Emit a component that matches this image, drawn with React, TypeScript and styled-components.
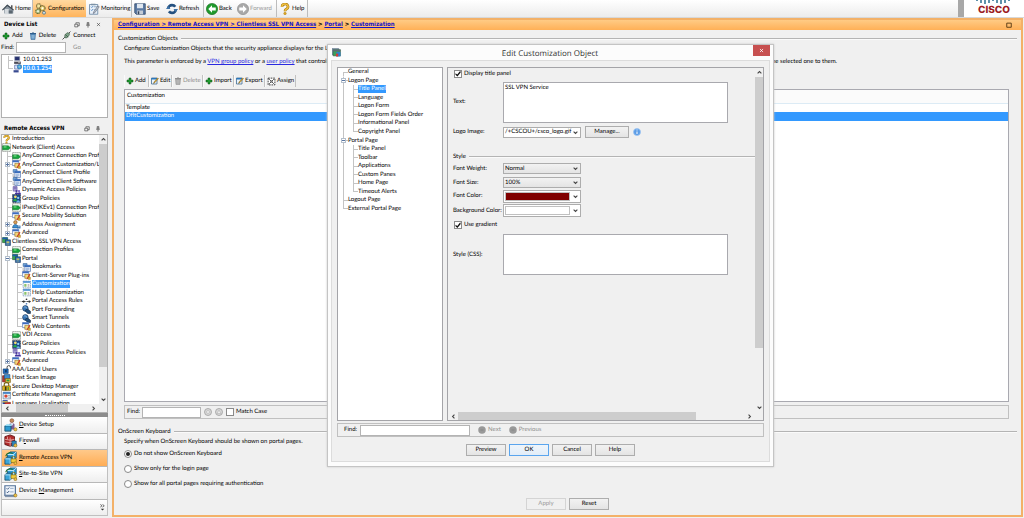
import React from "react";
import styled, { createGlobalStyle, css } from "styled-components";

const Global = createGlobalStyle`
  * { box-sizing: border-box; }
  body { margin: 0; background: #f0f0f0; }
  body, button, input, select, textarea, table {
    font-family: Lato, "Liberation Sans", sans-serif;
    font-size: 6px;
    line-height: 8px;
    color: #000;
    text-rendering: geometricPrecision;
  }
  button, input, select, textarea { margin: 0; padding: 0; border-radius: 0; }
  svg { display: block; flex: none; }
`;

/* ---------- icons ---------- */

const glyphs: Record<string, React.ReactNode> = {
  home: (<>
    <path d="M1 9 7 2l8 6v6H3V9z" fill="#8d99a3" /><path d="M0 9 7 2l9 7-1 1-8-6-6 6z" fill="#3d4750" />
    <path d="M4 8h5v7H4z" fill="#d5dade" /><path d="M9 10h5v4H9z" fill="#5b6770" /><path d="M12 3h2v4h-2z" fill="#555" />
  </>),
  gears: (<>
    <circle cx="5" cy="4" r="3" fill="#f4e6a0" stroke="#6e6230" strokeWidth="1.5" strokeDasharray="1.6 .6" />
    <circle cx="10" cy="7" r="3.4" fill="#efd877" stroke="#6e6230" strokeWidth="1.5" strokeDasharray="1.8 .6" />
    <circle cx="4" cy="11" r="3" fill="#c8d7a0" stroke="#56652f" strokeWidth="1.5" strokeDasharray="1.6 .6" />
    <circle cx="12" cy="13" r="2" fill="#cfe0e8" stroke="#4a6a78" />
    <circle cx="10" cy="7" r="1.2" fill="#fff" /><circle cx="4" cy="11" r="1" fill="#fff" />
  </>),
  monitor: (<>
    <path d="M2 2h11v13H2z" fill="#e8f1fa" stroke="#5c7c9c" /><path d="M4 5l1 1 2-2M4 9l1 1 2-2" stroke="#2968b0" fill="none" />
    <path d="M8 5h4M8 9h3" stroke="#7a98b4" /><path d="M15 5 9 13l-2 1 .4-2L13 4z" fill="#b8c6d2" stroke="#445" strokeWidth=".6" />
    <path d="M4 1h6v2H4z" fill="#7d92a5" />
  </>),
  save: (<>
    <path d="M1 1h14v14H3l-2-2z" fill="#5b7aa3" stroke="#2c4464" /><path d="M4 1h8v6H4z" fill="#dfe7f0" />
    <path d="M4 10h8v5H4z" fill="#c4ccd6" /><path d="M5 11h2v4H5z" fill="#34455c" />
  </>),
  refresh: (<>
    <circle cx="8" cy="8" r="5.200" fill="none" stroke="#24507f" strokeWidth="3.600" strokeDasharray="12.500 3.800" />
    <path d="M10 8h6l-3 4zM6 8H0l3-4z" fill="#3f74a8" />
  </>),
  back: (<><circle cx="8" cy="8" r="7.5" fill="#1f9a2c" stroke="#11661a" strokeWidth=".8" /><path d="M8 3 3 8l5 5v-3h5V6H8z" fill="#fff" /></>),
  forward: (<><circle cx="8" cy="8" r="7.5" fill="#a9a9a9" stroke="#8a8a8a" strokeWidth=".8" /><path d="M8 3l5 5-5 5v-3H3V6h5z" fill="#fff" /></>),
  help: (<><path d="M4 5a4 3.600 0 1 1 5.500 3.300Q8 9 8 11" fill="none" stroke="#a87a14" strokeWidth="3.600" /><path d="M4 5a4 3.600 0 1 1 5.500 3.300Q8 9 8 11" fill="none" stroke="#f0c040" strokeWidth="2" /><circle cx="8" cy="14" r="1.700" fill="#e0a820" stroke="#a87a14" strokeWidth=".6" /></>),
  add: (<path d="M6 2h4v4h4v4h-4v4H6v-4H2V6h4z" fill="#1f9c30" stroke="#0c4f16" />),
  trash: (<><path d="M3 4h10l-1 11H4z" fill="#5b93c4" stroke="#2f5e8c" /><path d="M2 2h12v2H2zM6 1h4v1H6z" fill="#2f5e8c" /><path d="M6 6v7M8 6v7M10 6v7" stroke="#cfe2f2" strokeWidth=".8" /></>),
  trashOff: (<><path d="M3 4h10l-1 11H4z" fill="#aaa" stroke="#8c8c8c" /><path d="M2 2h12v2H2zM6 1h4v1H6z" fill="#8c8c8c" /><path d="M6 6v7M8 6v7M10 6v7" stroke="#ccc" strokeWidth=".8" /></>),
  connect: (<><path d="M1 15 5 11M12 4l3-3" stroke="#333" strokeWidth="1.500" /><path d="M5 7l4-4 4 1 0 3-4 5-4 0z" fill="#7fa58a" stroke="#2d4a36" /><path d="M6 6l5 5" stroke="#1d3324" /></>),
  host: (<><path d="M3 1h9v7H3z" fill="#26306e" stroke="#9aa3b4" /><path d="M2 10h12v4H2z" fill="#4c4c58" /><path d="M9 11h4v1H9z" fill="#ddd" /></>),
  hostOn: (<><path d="M3 2h8v7H3z" fill="#e6eefc" stroke="#2a3f8c" /><path d="M1 11h9v4H1z" fill="#394a90" /><circle cx="11.500" cy="5" r="4" fill="#4aa3df" stroke="#1d5c96" /><path d="M10 3l2 1-1 3z" fill="#bfe8a8" /></>),
  edit: (<><path d="M1 2h11v12H1z" fill="#eaf3fb" stroke="#35648f" strokeWidth="1.500" /><path d="M1 2h11v3H1z" fill="#2b78bd" /><path d="M15 3 8 11l-3 2 1-3 7-8z" fill="#f0b429" stroke="#4b3a10" strokeWidth=".8" /></>),
  assign: (<><path d="M2 2h12v12H2z" fill="#fff" stroke="#222" strokeDasharray="3 1.500" strokeWidth="1.500" /><path d="M4 4l8 8M12 4l-8 8" stroke="#222" strokeWidth="1.500" /><path d="M6 6h4v4H6z" fill="#777" /></>),
  profile: (<><path d="M1 1h14v14H1z" fill="#eef8ee" stroke="#333" strokeDasharray="2 1.500" /><path d="M1 5h10l4 3.500-4 3.500H1z" fill="#18a53c" stroke="#0b5c20" strokeWidth=".8" /><path d="M3 6h5v2H3z" fill="#7fe08f" /></>),
  custom: (<><path d="M1 1h11v9H1z" fill="#fff" stroke="#2f57a0" /><path d="M1 1h11v3H1z" fill="#3d6cc0" /><path d="M5 6h8v7H5z" fill="#f5d67a" stroke="#8a6a1a" /><path d="M15 6l-5 8-2 1 .5-2L13 5z" fill="#d23b2a" /><path d="M11 11h4v4h-4z" fill="#e7b32c" stroke="#80600c" strokeWidth=".6" /></>),
  doc: (<><path d="M2 1h7v5H2z" fill="#70a7dd" stroke="#2b5a93" /><path d="M5 4h10v11H5z" fill="#eaf2fc" stroke="#27509a" /><path d="M5 4h10v3H5z" fill="#2d64b8" /><path d="M7 9h6M7 11h6M7 13h4" stroke="#5b83bd" /><path d="M2 8v6h3" stroke="#777" fill="none" /></>),
  policy: (<><path d="M2 1h7v8H2z" fill="#b9aee0" stroke="#4d3f94" /><path d="M3 3h5M3 5h5" stroke="#4d3f94" /><circle cx="8" cy="9" r="2" fill="#4b3c9a" /><circle cx="12.500" cy="9" r="2" fill="#7b62c9" /><path d="M5 15c0-5 6-5 6 0zM10 15c0-5 6-5 6 0z" fill="#4432a0" /></>),
  group: (<><path d="M1 1h14v14H1z" fill="#1b4a8c" stroke="#111" strokeDasharray="2 1" /><circle cx="6" cy="5" r="2.500" fill="#f0d870" /><path d="M2 13c0-6 7-6 7 0z" fill="#29a847" /><circle cx="11" cy="7" r="2" fill="#8fd3f5" /><path d="M8 15c0-5 6-5 6 0z" fill="#6fb8e8" /></>),
  address: (<><circle cx="6" cy="4" r="3" fill="#d9a05a" stroke="#7a4d1a" /><path d="M1 14c0-8 10-8 10 0z" fill="#3b8fd0" stroke="#1b4f80" /><path d="M9 10h6v5H9z" fill="#2567a8" /><path d="M10 12h4" stroke="#fff" /></>),
  ssl: (<><path d="M1 1h9v9H1z" fill="#3aa852" stroke="#16471f" /><path d="M1 1h9v3H1z" fill="#1d5db0" /><path d="M6 5h9v10H6z" fill="#2d70ba" stroke="#0f2a50" /><path d="M8 8h5v2H8zM8 12h5v1H8z" fill="#f3d34c" /></>),
  page: (<><path d="M2 2h13v12H2z" fill="#fff" stroke="#3f6f9f" strokeDasharray="3 1" /><path d="M2 2h13v3H2z" fill="#4b8fd2" /><path d="M4 7h4v5H4z" fill="#8cc46c" /><path d="M10 8h3M10 10h3M10 12h3" stroke="#888" /></>),
  rule: (<><path d="M0 8h16" stroke="#222" strokeWidth="1.500" strokeDasharray="2 1" /><circle cx="3" cy="8" r="2" fill="#333" /><circle cx="8" cy="4" r="1.500" fill="#333" /><circle cx="8" cy="12" r="1.500" fill="#4a78b8" /><circle cx="13" cy="8" r="2" fill="#333" /></>),
  tunnel: (<><circle cx="6" cy="6" r="5" fill="#3977b8" stroke="#122b4a" /><path d="M3 4c3-2 5 0 6 3" stroke="#b5dcf8" fill="none" /><path d="M7 8l3-1 5 4v4h-5l-4-4z" fill="#23507e" stroke="#0a1d33" /></>),
  lock: (<><path d="M9 7V4a3 3 0 0 1 6 0v2" fill="none" stroke="#2d2d2d" strokeWidth="1.500" /><path d="M2 7h9v8H2z" fill="#1f6dc0" stroke="#0b315c" /><path d="M6 9h2v4H6z" fill="#0b1d33" /></>),
  scan: (<><path d="M1 3h9v11H1z" fill="#c03a2b" stroke="#5e1610" /><path d="M4 1h10v8H4z" fill="#3b8bd0" stroke="#173f66" /><path d="M6 8h9v7H6z" fill="#e8bc3c" stroke="#6e5210" /><path d="M8 10h5v3H8z" fill="#2b9c43" /></>),
  desktop: (<><path d="M4 7V4a4 3 0 0 1 8 0v3" fill="none" stroke="#7d6410" strokeWidth="2" /><path d="M1 7h14v8H1z" fill="#e5b91c" stroke="#5d4a08" /><path d="M5 8h3v7H5z" fill="#3a3412" /><path d="M10 9h2v5h-2z" fill="#3a8f43" /></>),
  cert: (<><path d="M2 2h13v12H2z" fill="#e7f1fa" stroke="#42658a" /><path d="M2 2h13v3H2z" fill="#3a7cc0" /><circle cx="7" cy="9" r="3" fill="#d9432f" /><path d="M11 8h3M11 11h3" stroke="#777" /></>),
  lang: (<><path d="M1 2h9v7H1z" fill="#2344a0" /><path d="M5 6h10v8H5z" fill="#c53030" stroke="#701515" /><path d="M1 5h9" stroke="#f3d34c" strokeWidth="2" /></>),
  setup: (<><circle cx="9" cy="3" r="2.200" fill="#c98a5a" stroke="#6b3f1e" strokeWidth=".6" /><path d="M6 13V7q3-3 6 0v6z" fill="#7d5f94" /><path d="M7 6l2 3 2-3z" fill="#fff" /><path d="M1 9h7v6H1z" fill="#2c9ad0" stroke="#125170" /><path d="M1 9l2-2h7l-2 2z" fill="#8fd8f3" /><circle cx="13" cy="13" r="1.800" fill="#efc448" stroke="#8a671a" strokeWidth=".7" /></>),
  firewall: (<><path d="M1 3l6-2 5 2v9l-5 2-6-2z" fill="#b22a2a" stroke="#5e0f0f" /><path d="M1 6l6 1 5-1M1 9l6 1 5-1M7 4v10M4 3v3M9 7v3" stroke="#f1c5c0" strokeWidth=".8" fill="none" /><path d="M9 8h5v6H9z" fill="#2f86bd" stroke="#124361" strokeWidth=".7" /><circle cx="13" cy="13" r="1.800" fill="#efc448" stroke="#8a671a" strokeWidth=".7" /></>),
  vpn: (<><path d="M4 4l3-3h7v7l-3 3H4z" fill="#2d9cd6" stroke="#0f4a6e" strokeWidth=".8" /><path d="M4 4h7v7M11 4l3-3" stroke="#d5f1ff" fill="none" /><path d="M1 9l2-2h6v6l-2 2H1z" fill="#3aa5d8" stroke="#0c3d5a" strokeWidth=".8" /><path d="M1 9h6v6" stroke="#d5f1ff" fill="none" strokeWidth=".8" /><path d="M2 6c1-4 5-5 8-3" fill="none" stroke="#1c6b2c" strokeWidth="1.200" /><path d="M9 9V8a2 2 0 0 1 4 0v1" fill="none" stroke="#8a6a10" /><path d="M8 9h6v4H8z" fill="#f1cd3d" stroke="#856a10" strokeWidth=".7" /><circle cx="13" cy="14" r="1.600" fill="#efc448" stroke="#8a671a" strokeWidth=".7" /></>),
  manage: (<><path d="M1 2h12v11H1z" fill="#eff4fb" stroke="#4f6f98" strokeWidth="1.300" /><path d="M3 5l1 1 2-2M3 9l1 1 2-2" stroke="#20406c" fill="none" /><path d="M7 5h4M7 9h4" stroke="#8ba4c4" /><path d="M1 13h12v2H1z" fill="#8193ab" /><circle cx="13" cy="13" r="1.800" fill="#efc448" stroke="#8a671a" strokeWidth=".7" /></>),
  app: (<><path d="M0 1h12v11H0z" fill="#8aa1b5" stroke="#50667c" /><path d="M2 3h13v11H2z" fill="#3aa05a" stroke="#3b5a4a" /><path d="M2 3h13v3H2z" fill="#5d6a78" /><path d="M8 7h7v8H8z" fill="#2e7fd0" /><path d="M7 10h4v5H7z" fill="#d63a34" /></>),
  info: (<><circle cx="8" cy="8" r="7" fill="#5b9ce6" stroke="#9cc4f2" strokeWidth="1.500" /><path d="M8 3v2M8 7v5" stroke="#fff" strokeWidth="2" /></>),
  dot: (<><circle cx="8" cy="8" r="7.500" fill="#999" /><path d="M5 8h6" stroke="#808080" strokeWidth="1.500" /></>),
  findDown: (<><circle cx="8" cy="8" r="7" fill="#d8d8d8" stroke="#999" strokeWidth="1.500" /><circle cx="8" cy="8" r="3" fill="#eee" stroke="#aaa" /></>),
  findUp: (<><circle cx="8" cy="8" r="7" fill="#d8d8d8" stroke="#999" strokeWidth="1.500" /><path d="M8 4l4 7H4z" fill="#eee" stroke="#aaa" /></>),
  float: (<><path d="M5 5V2h9v8h-4" fill="none" stroke="#333" strokeWidth="1.600" /><path d="M2 6h8v7H2z" fill="none" stroke="#333" strokeWidth="1.600" /></>),
  pin: (<path d="M5 2h6M6 2v6M10 2v6M3 8.500h10M8 9v6" fill="none" stroke="#333" strokeWidth="1.800" />),
  close: (<path d="M3 3l10 10M13 3 3 13" stroke="#333" strokeWidth="1.800" />),
  closeLight: (<path d="M3 3l10 10M13 3 3 13" stroke="#fff" strokeWidth="2.500" />),
  square: (<path d="M2 3h12v11H2z" fill="none" stroke="#5a3c14" strokeWidth="2.500" />),
  up: (<path d="M2 11l6-6 6 6" fill="none" stroke="#444" strokeWidth="3.400" />),
  down: (<path d="M2 5l6 6 6-6" fill="none" stroke="#444" strokeWidth="3.400" />),
  left: (<path d="M11 2 5 8l6 6" fill="none" stroke="#444" strokeWidth="3.400" />),
  right: (<path d="M5 2l6 6-6 6" fill="none" stroke="#444" strokeWidth="3.400" />),
  more: (<><path d="M3 1l4 3-4 3M8 1l4 3-4 3" fill="none" stroke="#333" strokeWidth="1.600" /><path d="M4 11h8l-4 4z" fill="#333" /></>),
};

const Icon = ({ name, size = 9 }: { name: string; size?: number }) => (
  <svg width={size} height={size} viewBox="0 0 16 16" aria-hidden="true">{glyphs[name]}</svg>
);

/* ---------- shared parts ---------- */

const bevel = css`
  border: 1px solid #adadad;
  background: linear-gradient(#f2f2f2, #e4e4e4);
`;

const PushButton = styled.button<{ $primary?: boolean }>`
  ${bevel}
  height: 12px;
  min-width: 40px;
  text-align: center;
  ${p => p.$primary && css`border-color: #5aa5ee; background: linear-gradient(#eff5fb, #e2edf8);`}
  &:disabled { color: #9a9a9a; border-color: #d4d4d4; background: #f0f0f0; }
`;

const FlatButton = styled.button`
  display: flex;
  align-items: center;
  gap: 2px;
  border: 0;
  background: transparent;
  white-space: nowrap;
  &:disabled { color: #8f8f8f; }
`;

const TextInput = styled.input<{ $w: number }>`
  width: ${p => p.$w}px;
  height: 11px;
  border: 1px solid #b4b4b4;
  background: #fff;
`;

const Tick = styled.input`
  appearance: none;
  display: grid;
  place-items: center;
  width: 8px;
  height: 8px;
  border: 1px solid #8a8a8a;
  background: #fff;
  &:checked::before {
    content: "";
    width: 6px;
    height: 6px;
    background: #111;
    clip-path: polygon(8% 45%, 38% 65%, 88% 5%, 95% 35%, 40% 98%, 8% 70%);
  }
`;

const Radio = styled.input`
  appearance: none;
  display: grid;
  place-items: center;
  width: 8px;
  height: 8px;
  border: 1px solid #8a8a8a;
  border-radius: 50%;
  background: #fff;
  &:checked::before {
    content: "";
    width: 4px;
    height: 4px;
    border-radius: 50%;
    background: #222;
  }
`;

const CheckLabel = styled.label`
  display: flex;
  align-items: center;
  gap: 2px;
  white-space: nowrap;
`;

const Legend = styled.h2`
  display: flex;
  align-items: center;
  gap: 3px;
  margin: 0;
  font-size: 6px;
  line-height: 8px;
  font-weight: normal;
  white-space: nowrap;
  &::after { content: ""; flex: 1; border-top: 1px solid #b4b4b4; border-bottom: 1px solid #fafafa; }
`;

/* ---------- scroll bars ---------- */

const VBar = styled.div`
  display: flex;
  flex-direction: column;
  align-items: center;
  gap: 2px;
  width: 8px;
  padding: 2px 0;
  background: #f0f0f0;
`;
const VTrack = styled.div`
  flex: 1;
  width: 8px;
  display: flex;
  flex-direction: column;
`;
const HBar = styled.div<{ $gap: number }>`
  display: flex;
  align-items: center;
  gap: ${p => p.$gap}px;
  height: 8px;
  padding: 0 11px 0 3px;
  background: #f0f0f0;
`;
const HTrack = styled.div`
  flex: 1;
  height: 8px;
  display: flex;
`;
const Thumb = styled.div<{ $part: number }>`
  flex: 0 0 ${p => p.$part}%;
  background: #cdcdcd;
`;

const VScroll = ({ part }: { part: number }) => (
  <VBar><Icon name="up" size={5} /><VTrack><Thumb $part={part} /></VTrack><Icon name="down" size={5} /></VBar>
);
const HScroll = ({ part, gap }: { part: number; gap: number }) => (
  <HBar $gap={gap}><Icon name="left" size={5} /><HTrack><Thumb $part={part} /></HTrack><Icon name="right" size={5} /></HBar>
);

/* ---------- tree ---------- */

const TreeList = styled.ul<{ $h: number }>`
  display: flex;
  flex-direction: column;
  flex: none;
  height: ${p => p.$h}px;
  margin: 0;
  padding: 0;
  list-style: none;
`;
const TreeRow = styled.li`
  flex: 1;
  min-height: 0;
  display: flex;
  align-items: center;
  white-space: nowrap;
  svg { margin-right: 1px; }
`;
const line = "linear-gradient(#c4c4c4, #c4c4c4) no-repeat";
const Guide = styled.span<{ $kind: string }>`
  display: grid;
  place-items: center;
  flex: none;
  width: 10px;
  align-self: stretch;
  background: ${p => ({
    v: `${line} 5px 0 / 1px 100%`,
    t: `${line} 5px 0 / 1px 100%, ${line} 5px 50% / 5px 1px`,
    l: `${line} 5px 0 / 1px 50%, ${line} 5px 50% / 5px 1px`,
    f: `${line} 5px 100% / 1px 50%, ${line} 5px 50% / 5px 1px`,
  } as Record<string, string>)[p.$kind] ?? "none"};
`;
const Expander = styled.span<{ $open: boolean }>`
  width: 5px;
  height: 5px;
  border: 1px solid #b4bfcc;
  background:
    linear-gradient(#5a76a2, #5a76a2) no-repeat 0 1px / 3px 1px,
    linear-gradient(#5a76a2, #5a76a2) no-repeat 1px 0 / ${p => (p.$open ? "0 0" : "1px 3px")},
    #fff;
`;
const NodeText = styled.span<{ $on?: boolean; $strong?: boolean }>`
  line-height: 8px;
  font-weight: ${p => (p.$strong ? "bold" : "normal")};
  ${p => p.$on && css`background: #3399ff; color: #fff;`}
`;

/* guides, label, icon, expander, selected, bold */
type Node = [string, string, string?, ("+" | "-")?, boolean?, boolean?];

const Tree = ({ nodes, height }: { nodes: Node[]; height: number }) => (
  <TreeList $h={height}>
    {nodes.map(([guides, label, icon, exp, on, strong], i) => (
      <TreeRow key={i}>
        {guides.split("").map((g, k) => (
          <Guide key={k} $kind={g}>
            {exp && k === guides.length - 1 && <Expander $open={exp === "-"} />}
          </Guide>
        ))}
        {icon && <Icon name={icon} size={9} />}
        <NodeText $on={on} $strong={strong}>{label}</NodeText>
      </TreeRow>
    ))}
  </TreeList>
);

const deviceTree: Node[] = [
  ["t", "10.0.1.253", "host"],
  ["l", "10.0.1.254", "hostOn", undefined, true, true],
];

const vpnTree: Node[] = [
  ["", "Introduction", "help"],
  ["", "Network (Client) Access", "profile"],
  ["t", "AnyConnect Connection Profiles", "profile"],
  ["t", "AnyConnect Customization/Localization", "custom", "+"],
  ["t", "AnyConnect Client Profile", "doc"],
  ["t", "AnyConnect Client Software", "doc"],
  ["t", "Dynamic Access Policies", "policy"],
  ["t", "Group Policies", "group"],
  ["t", "IPsec(IKEv1) Connection Profiles", "profile"],
  ["t", "Secure Mobility Solution", "custom"],
  ["t", "Address Assignment", "address", "+"],
  ["l", "Advanced", "custom", "+"],
  ["", "Clientless SSL VPN Access", "ssl"],
  ["t", "Connection Profiles", "profile"],
  ["t", "Portal", "ssl", "-"],
  ["vt", "Bookmarks", "doc"],
  ["vt", "Client-Server Plug-ins", "custom"],
  ["vt", "Customization", "page", undefined, true],
  ["vt", "Help Customization", "page"],
  ["vt", "Portal Access Rules", "rule"],
  ["vt", "Port Forwarding", "tunnel"],
  ["vt", "Smart Tunnels", "tunnel"],
  ["vl", "Web Contents", "custom"],
  ["t", "VDI Access", "profile"],
  ["t", "Group Policies", "group"],
  ["t", "Dynamic Access Policies", "policy"],
  ["l", "Advanced", "custom", "+"],
  ["", "AAA/Local Users", "lock"],
  ["", "Host Scan Image", "scan"],
  ["", "Secure Desktop Manager", "desktop"],
  ["", "Certificate Management", "cert"],
  ["", "Language Localization", "lang"],
];

const portalTree: Node[] = [
  ["f", "General"],
  ["t", "Logon Page", undefined, "-"],
  ["vt", "Title Panel", undefined, undefined, true],
  ["vt", "Language"],
  ["vt", "Logon Form"],
  ["vt", "Logon Form Fields Order"],
  ["vt", "Informational Panel"],
  ["vl", "Copyright Panel"],
  ["t", "Portal Page", undefined, "-"],
  ["vt", "Title Panel"],
  ["vt", "Toolbar"],
  ["vt", "Applications"],
  ["vt", "Custom Panes"],
  ["vt", "Home Page"],
  ["vl", "Timeout Alerts"],
  ["t", "Logout Page"],
  ["l", "External Portal Page"],
];

/* ---------- frame ---------- */

const Shell = styled.div`
  position: relative;
  display: flex;
  flex-direction: column;
  height: 100vh;
  overflow: hidden;
  background: #f0f0f0;
`;
const TopBar = styled.header`
  display: flex;
  flex: none;
  height: 18px;
  background: linear-gradient(#ffffff, #ececec);
  border-bottom: 1px solid #d8d8d8;
`;
const TopButton = styled.button<{ $w: number; $on?: boolean; $sep?: boolean }>`
  display: flex;
  align-items: center;
  gap: 1px;
  width: ${p => p.$w}px;
  padding-left: 2px;
  border: 0;
  border-right: 1px solid ${p => (p.$sep ? "#bdbdbd" : "transparent")};
  background: ${p => (p.$on ? "linear-gradient(#ffd9a0, #ffb45c)" : "transparent")};
  white-space: nowrap;
  &:disabled { color: #9a9a9a; }
`;
const Brand = styled.div`
  display: flex;
  flex-direction: column;
  align-items: center;
  width: 66px;
  margin-left: auto;
  border-left: 6px solid #a8a8a8;
  background: #fff;
  color: #9c1c24;
  font: 800 10px/12px Inter, sans-serif;
`;
const Body = styled.div`
  display: flex;
  flex: 1;
  min-height: 0;
`;
const Side = styled.aside`
  display: flex;
  flex-direction: column;
  flex: none;
  width: 108px;
  padding: 1px 0 2px 1px;
`;
const PanelHead = styled.div`
  display: flex;
  align-items: center;
  gap: 5px;
  flex: none;
  height: 11px;
  padding: 0 7px 0 3px;
  font-family: "DejaVu Sans Condensed", sans-serif;
  font-weight: bold;
  white-space: nowrap;
  span { flex: 1; }
`;
const DeviceTools = styled.div`
  display: flex;
  align-items: center;
  gap: 6px;
  height: 11px;
  padding-left: 1px;
`;
const FindRow = styled.div`
  display: flex;
  align-items: center;
  height: 13px;
  gap: 2px;
  ${FlatButton} { margin-left: 5px; }
`;
const DeviceBox = styled.div`
  flex: none;
  height: 64px;
  margin-bottom: 5px;
  padding: 1px 0 0 1px;
  border: 1px solid #b0b0b0;
  background: #fff;
`;
const NavBox = styled.div`
  display: flex;
  flex-direction: column;
  flex: 1;
  min-height: 0;
  border: 1px solid #b0b0b0;
  background: #fff;
`;
const NavView = styled.div`
  display: flex;
  flex: 1;
  min-height: 0;
  overflow: hidden;
`;
const Clip = styled.div`
  flex: 1;
  min-width: 0;
  overflow: hidden;
`;
const Splitter = styled.div`
  display: grid;
  place-items: center;
  flex: none;
  height: 4px;
  background: #8c8c8c;
  &::before { content: ""; width: 20px; border-top: 1px dotted #fff; }
`;
const Stack = styled.nav`
  display: flex;
  flex-direction: column;
  flex: none;
  height: 99px;
  border: 1px solid #c0c0c0;
  border-top: 0;
`;
const StackButton = styled.button<{ $on?: boolean }>`
  display: flex;
  align-items: center;
  gap: 1px;
  flex: 1;
  min-height: 0;
  padding-left: 2px;
  border: 0;
  border-bottom: 1px solid #b8b8b8;
  background: ${p => (p.$on ? "linear-gradient(#ffc98a, #ffad55)" : "linear-gradient(#ffffff, #eeeeee)")};
  text-align: left;
`;
const StackMore = styled.div`
  display: flex;
  justify-content: flex-end;
  align-items: center;
  flex: 1;
  padding-right: 1px;
  background: linear-gradient(#ffffff, #eeeeee);
`;

const Main = styled.main`
  display: flex;
  flex-direction: column;
  flex: 1;
  min-width: 0;
  margin: 0 1px 1px 4px;
  border: 2px solid #f3b168;
  background: #f0f0f0;
`;
const Crumbs = styled.div`
  display: flex;
  align-items: center;
  justify-content: space-between;
  flex: none;
  height: 10px;
  padding: 0 9px 0 4px;
  background: linear-gradient(#ffcb85, #ffb057);
  font-family: "DejaVu Sans Condensed", sans-serif;
  font-weight: bold;
  white-space: nowrap;
  a { color: #1414c8; }
`;
const Content = styled.div`
  display: flex;
  flex-direction: column;
  flex: 1;
  min-height: 0;
  padding: 5px 4px 5px;
`;
const Group = styled.section`
  display: flex;
  flex-direction: column;
  flex: 1;
  min-height: 0;
  padding: 2px 8px 9px 6px;
`;
const Para = styled.p`
  margin: 0 0 5px;
  white-space: nowrap;
`;
const Wide = styled.p`
  display: flex;
  justify-content: space-between;
  margin: 0;
  padding-right: 172px;
  white-space: nowrap;
  a { color: #2a2ae0; }
`;
const Tools = styled.div`
  display: flex;
  flex: none;
  height: 12px;
  margin: 9px 0 2px;
`;
const ToolButton = styled(FlatButton)<{ $w: number }>`
  gap: 1px;
  width: ${p => p.$w}px;
  padding-left: 1px;
  border-right: 1px solid #c2c2c2;
  border-left: 1px solid #fafafa;
`;
const TableBox = styled.div`
  flex: 1;
  min-height: 0;
  margin-bottom: 3px;
  border: 1px solid #a9a9b0;
  background: #fff;
`;
const Table = styled.table`
  width: 100%;
  border-collapse: collapse;
  th { height: 13px; padding: 0 2px; font-weight: normal; text-align: left; border-bottom: 1px solid #dcebf5; background: #fbfbfb; }
  td { height: 8px; padding: 0 1px; }
`;
const Row = styled.tr<{ $on?: boolean }>`
  ${p => p.$on && css`td { height: 9px; background: #3399ff; color: #fff; }`}
`;
const FindBar = styled.div<{ $inset?: boolean }>`
  display: flex;
  align-items: center;
  flex: none;
  gap: ${p => (p.$inset ? 8 : 3)}px;
  height: 14px;
  border: 1px solid #c0c0c0;
  padding-left: ${p => (p.$inset ? 6 : 2)}px;
  label { display: flex; align-items: center; gap: ${p => (p.$inset ? 3 : 2)}px; }
`;
const Radios = styled.div`
  display: flex;
  flex-direction: column;
  gap: 7px;
  padding-left: 6px;
`;
const Hint = styled.p`
  margin: 2px 0 4px 6px;
`;
const Actions = styled.div`
  display: flex;
  justify-content: center;
  gap: 3px;
  margin-top: 10px;
`;

/* ---------- dialog ---------- */

const Dialog = styled.div`
  position: absolute;
  left: 327px;
  top: 44px;
  width: 447px;
  height: 423px;
  display: flex;
  flex-direction: column;
  padding: 0 3px 4px;
  border: 1px solid #c4c4c4;
  background: #fcfcfc;
  box-shadow: 0 0 2px #c8c8c8;
`;
const TitleBar = styled.div`
  display: flex;
  align-items: flex-start;
  flex: none;
  height: 15px;
  padding-left: 1px;
  svg { margin-top: 3px; }
  h1 { flex: 1; margin: 0; padding: 3px 0 0 6px; font: normal 8px/12px "Open Sans", sans-serif; text-align: center; color: #333; }
`;
const CloseButton = styled.button`
  display: grid;
  place-items: center;
  width: 17px;
  height: 11px;
  border: 0;
  background: #c75050;
  svg { margin: 0; }
`;
const Pane = styled.div`
  display: flex;
  flex-direction: column;
  flex: 1;
  min-height: 0;
  padding: 6px 5px 5px;
  border: 1px solid #dcdcdc;
  background: #f0f0f0;
`;
const Split = styled.div`
  display: flex;
  gap: 4px;
  flex: 1;
  min-height: 0;
  margin-bottom: 2px;
`;
const TreePane = styled.div`
  flex: none;
  width: 106px;
  border: 1px solid #a4a4a8;
  background: #fff;
`;
const FormPane = styled.div`
  flex: 1;
  display: flex;
  flex-direction: column;
  border: 1px solid #a4a4a8;
`;
const FormView = styled.div`
  flex: 1;
  min-height: 0;
  display: flex;
`;
const Form = styled.form`
  flex: 1;
  padding: 1px 0 0 5px;
`;
const Field = styled.div<{ $h: number }>`
  display: grid;
  grid-template-columns: 50px 1fr;
  align-items: center;
  height: ${p => p.$h}px;
  label { white-space: nowrap; }
`;
const StyleGroup = styled.div`
  padding-top: 18px;
`;
const Area = styled.textarea`
  width: 225px;
  height: 41px;
  padding: 1px;
  border: 1px solid #a9a9ae;
  background: #fff;
  resize: none;
  overflow: hidden;
`;
const Combo = styled.div<{ $flat?: boolean; $tall?: boolean }>`
  ${bevel}
  display: flex;
  align-items: center;
  width: 78px;
  height: ${p => (p.$tall ? 13 : 11)}px;
  padding: 0 2px 0 1px;
  ${p => p.$flat && css`background: #fff;`}
  select, input { appearance: none; flex: 1; min-width: 0; border: 0; background: transparent; }
`;
const Swatch = styled.button<{ $c: string }>`
  flex: 1;
  height: 9px;
  margin-right: 3px;
  border: 1px solid #c0c0c0;
  background: ${p => p.$c};
`;
const Inline = styled.div`
  display: flex;
  align-items: center;
  gap: 4px;
  button { height: 12px; min-width: 44px; }
`;
const TickLine = styled.div<{ $h: number }>`
  display: flex;
  align-items: center;
  height: ${p => p.$h}px;
  padding-left: 1px;
`;
const DialogButtons = styled.div`
  display: flex;
  justify-content: center;
  gap: 3px;
  margin-top: 7px;
`;

export default function App() {
  return (
    <>
      <Global />
      <Shell>
        <TopBar>
          <TopButton $w={33} $sep><Icon name="home" size={12} />Home</TopButton>
          <TopButton $w={53} $on><Icon name="gears" size={12} />Configuration</TopButton>
          <TopButton $w={46} $sep><Icon name="monitor" size={12} />Monitoring</TopButton>
          <TopButton $w={32}><Icon name="save" size={12} />Save</TopButton>
          <TopButton $w={40} $sep><Icon name="refresh" size={12} />Refresh</TopButton>
          <TopButton $w={31}><Icon name="back" size={12} />Back</TopButton>
          <TopButton $w={42} $sep disabled><Icon name="forward" size={12} />Forward</TopButton>
          <TopButton $w={31} $sep><Icon name="help" size={12} />Help</TopButton>
          <Brand>
            <svg width="38" height="4" viewBox="0 0 38 4" aria-hidden="true">
              <path d="M2 0v1M6 0v3M10 0v4M14 0v3M18 0v1M22 0v3M26 0v4M30 0v3M34 0v1" stroke="#2a6f8f" strokeWidth="1.500" />
            </svg>
            CISCO
          </Brand>
        </TopBar>
        <Body>
          <Side>
            <PanelHead><span>Device List</span><Icon name="float" size={6} /><Icon name="pin" size={6} /><Icon name="close" size={5} /></PanelHead>
            <DeviceTools>
              <FlatButton><Icon name="add" size={8} />Add</FlatButton>
              <FlatButton><Icon name="trash" size={8} />Delete</FlatButton>
              <FlatButton><Icon name="connect" size={9} />Connect</FlatButton>
            </DeviceTools>
            <FindRow>
              <label htmlFor="dev-find">Find:</label>
              <TextInput id="dev-find" $w={50} />
              <FlatButton disabled>Go</FlatButton>
            </FindRow>
            <DeviceBox><Tree height={17} nodes={deviceTree} /></DeviceBox>
            <PanelHead><span>Remote Access VPN</span><Icon name="float" size={6} /><Icon name="pin" size={6} /></PanelHead>
            <NavBox>
              <NavView>
                <Clip><Tree nodes={vpnTree} height={273} /></Clip>
                <VScroll part={89} />
              </NavView>
              <HScroll part={76} gap={6} />
            </NavBox>
            <Splitter />
            <Stack>
              <StackButton><Icon name="setup" size={14} /><span><u>D</u>evice Setup</span></StackButton>
              <StackButton><Icon name="firewall" size={14} /><span>Fi<u>r</u>ewall</span></StackButton>
              <StackButton $on><Icon name="vpn" size={14} /><span><u>R</u>emote Access VPN</span></StackButton>
              <StackButton><Icon name="vpn" size={14} /><span><u>S</u>ite-to-Site VPN</span></StackButton>
              <StackButton><Icon name="manage" size={14} /><span>Device <u>M</u>anagement</span></StackButton>
              <StackMore><Icon name="more" size={7} /></StackMore>
            </Stack>
          </Side>
          <Main>
            <Crumbs>
              <span>
                <a href="#c">Configuration &gt; Remote Access VPN &gt; Clientless SSL VPN Access</a> &gt; <a href="#p">Portal</a> &gt; <a href="#u">Customization</a>
              </span>
              <Icon name="square" size={6} />
            </Crumbs>
            <Content>
              <Legend>Customization Objects</Legend>
              <Group>
                <Para>Configure Customization Objects that the security appliance displays for the Logon Page.</Para>
                <Wide>
                  <span>This parameter is enforced by a <a href="#g">VPN group policy</a> or a <a href="#o">user policy</a> that controls</span>
                  <span>the selected one to them.</span>
                </Wide>
                <Tools>
                  <ToolButton $w={25}><Icon name="add" size={8} />Add</ToolButton>
                  <ToolButton $w={23}><Icon name="edit" size={8} />Edit</ToolButton>
                  <ToolButton $w={31} disabled><Icon name="trashOff" size={8} />Delete</ToolButton>
                  <ToolButton $w={31}><Icon name="add" size={8} />Import</ToolButton>
                  <ToolButton $w={31}><Icon name="edit" size={8} />Export</ToolButton>
                  <ToolButton $w={31}><Icon name="assign" size={9} />Assign</ToolButton>
                </Tools>
                <TableBox>
                  <Table>
                    <thead><tr><th scope="col">Customization</th></tr></thead>
                    <tbody>
                      <Row><td>Template</td></Row>
                      <Row $on><td>DfltCustomization</td></Row>
                    </tbody>
                  </Table>
                </TableBox>
                <FindBar>
                  <label>Find: <TextInput $w={59} /></label>
                  <Icon name="findDown" size={8} />
                  <Icon name="findUp" size={8} />
                  <CheckLabel><Tick type="checkbox" />Match Case</CheckLabel>
                </FindBar>
              </Group>
              <Legend>OnScreen Keyboard</Legend>
              <Hint>Specify when OnScreen Keyboard should be shown on portal pages.</Hint>
              <Radios>
                <CheckLabel><Radio type="radio" name="osk" defaultChecked />Do not show OnScreen Keyboard</CheckLabel>
                <CheckLabel><Radio type="radio" name="osk" />Show only for the login page</CheckLabel>
                <CheckLabel><Radio type="radio" name="osk" />Show for all portal pages requiring authentication</CheckLabel>
              </Radios>
              <Actions>
                <PushButton disabled>Apply</PushButton>
                <PushButton>Reset</PushButton>
              </Actions>
            </Content>
          </Main>
        </Body>

        <Dialog role="dialog" aria-labelledby="dlg-title">
          <TitleBar>
            <Icon name="app" size={9} />
            <h1 id="dlg-title">Edit Customization Object</h1>
            <CloseButton aria-label="Close"><Icon name="closeLight" size={5} /></CloseButton>
          </TitleBar>
          <Pane>
            <Split>
              <TreePane><Tree nodes={portalTree} height={145} /></TreePane>
              <FormPane>
                <FormView>
                  <Form>
                    <TickLine $h={9}><CheckLabel><Tick type="checkbox" defaultChecked />Display title panel</CheckLabel></TickLine>
                    <Field $h={48}><label htmlFor="f-text">Text:</label><Area id="f-text" defaultValue="SSL VPN Service" /></Field>
                    <Field $h={9}>
                      <label htmlFor="f-logo">Logo Image:</label>
                      <Inline>
                        <Combo $flat><input id="f-logo" defaultValue="/+CSCOU+/csco_logo.gif" /><Icon name="down" size={5} /></Combo>
                        <PushButton type="button">Manage...</PushButton>
                        <Icon name="info" size={8} />
                      </Inline>
                    </Field>
                    <StyleGroup>
                      <Legend>Style</Legend>
                      <Field $h={15}><label htmlFor="f-w">Font Weight:</label><Combo><select id="f-w"><option>Normal</option></select><Icon name="down" size={5} /></Combo></Field>
                      <Field $h={13}><label htmlFor="f-s">Font Size:</label><Combo><select id="f-s"><option>100%</option></select><Icon name="down" size={5} /></Combo></Field>
                      <Field $h={14}><label htmlFor="f-c">Font Color:</label><Combo $flat $tall><Swatch type="button" id="f-c" $c="#800000" /><Icon name="down" size={5} /></Combo></Field>
                      <Field $h={15}><label htmlFor="f-b">Background Color:</label><Combo $flat $tall><Swatch type="button" id="f-b" $c="#ffffff" /><Icon name="down" size={5} /></Combo></Field>
                      <TickLine $h={14}><CheckLabel><Tick type="checkbox" defaultChecked />Use gradient</CheckLabel></TickLine>
                      <Field $h={45}><label htmlFor="f-css">Style (CSS):</label><Area id="f-css" /></Field>
                    </StyleGroup>
                  </Form>
                  <VScroll part={83} />
                </FormView>
                <HScroll part={83} gap={2} />
              </FormPane>
            </Split>
            <FindBar $inset>
              <label>Find: <TextInput $w={110} /></label>
              <FlatButton disabled><Icon name="dot" size={8} />Next</FlatButton>
              <FlatButton disabled><Icon name="dot" size={8} />Previous</FlatButton>
            </FindBar>
            <DialogButtons>
              <PushButton>Preview</PushButton>
              <PushButton $primary>OK</PushButton>
              <PushButton>Cancel</PushButton>
              <PushButton>Help</PushButton>
            </DialogButtons>
          </Pane>
        </Dialog>
      </Shell>
    </>
  );
}
